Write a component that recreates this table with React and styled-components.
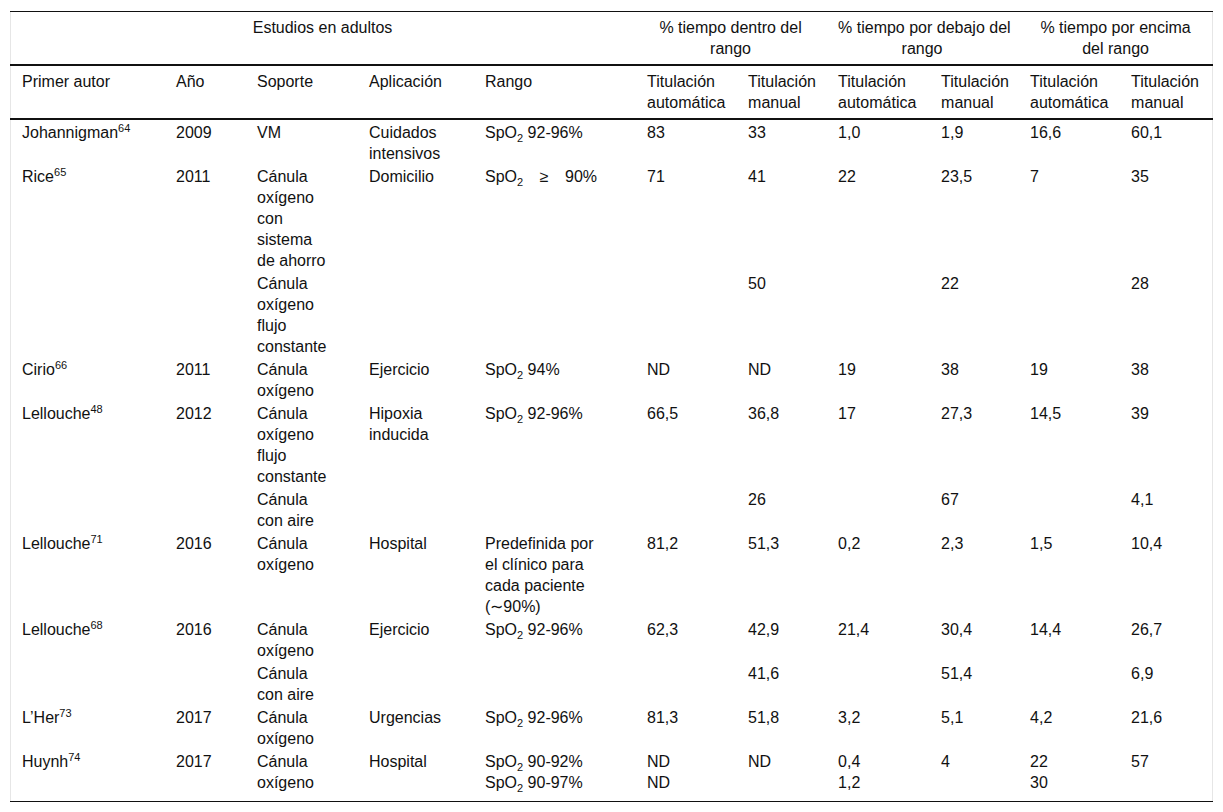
import React from "react";
import styled, { createGlobalStyle } from "styled-components";

const Global = createGlobalStyle`
  html, body { margin: 0; padding: 0; background: #ffffff; }
  body { font-family: "Liberation Sans", Arial, sans-serif; color: #111111; }
`;

const COLS = [
  { w: 154, pr: 12 },
  { w: 81, pr: 8 },
  { w: 112, pr: 25 },
  { w: 116, pr: 12 },
  { w: 162, pr: 38 },
  { w: 101, pr: 8 },
  { w: 90, pr: 6 },
  { w: 103, pr: 8 },
  { w: 89, pr: 6 },
  { w: 101, pr: 8 },
  { w: 94, pr: 6 },
];

const Page = styled.div`
  padding: 11px 10px 12px;
`;

const Frame = styled.div`
  width: 1203px;
  box-shadow: inset 1px 0 #e6e6e6, inset -1px 0 #e6e6e6;
`;

const Table = styled.table`
  width: 1203px;
  table-layout: fixed;
  border-collapse: collapse;
  font-size: 16px;
  line-height: 21px;
  border-top: 1px solid #111;
  border-bottom: 1px solid #111;
`;

const Col = styled.col`
  width: ${(p) => p.$w}px;
`;

const HeadRow = styled.tr`
  border-bottom: 2px solid #111;
`;

const HeadCell = styled.th`
  font-weight: 400;
  vertical-align: top;
  text-align: ${(p) => (p.$center ? "center" : "left")};
  white-space: ${(p) => (p.$center ? "nowrap" : "normal")};
  padding: 5px ${(p) => (p.$center ? 12 : p.$pr)}px 5px 12px;
`;

const Body = styled.tbody`
  tr:last-child td {
    padding-bottom: 8px;
  }
`;

const Cell = styled.td`
  vertical-align: top;
  text-align: left;
  padding: 2px ${(p) => p.$pr}px 0 12px;
  ${(p) => (p.$justify ? "text-align: justify; text-align-last: justify;" : "")}
`;

const Sup = styled.sup`
  font-size: 11px;
  line-height: 0;
  vertical-align: 6px;
`;

const Sub = styled.sub`
  font-size: 11px;
  line-height: 0;
  vertical-align: -4px;
`;

const Author = ({ name, refNo }) => (
  <>
    {name}
    <Sup>{refNo}</Sup>
  </>
);

const Spo = ({ children }) => (
  <>
    SpO<Sub>2</Sub> {children}
  </>
);

const rows = [
  {
    cells: [
      <Author name="Johannigman" refNo="64" />,
      "2009",
      "VM",
      "Cuidados intensivos",
      <Spo>92-96%</Spo>,
      "83",
      "33",
      "1,0",
      "1,9",
      "16,6",
      "60,1",
    ],
  },
  {
    justify: 4,
    cells: [
      <Author name="Rice" refNo="65" />,
      "2011",
      "Cánula oxígeno con sistema de ahorro",
      "Domicilio",
      <Spo>≥ 90%</Spo>,
      "71",
      "41",
      "22",
      "23,5",
      "7",
      "35",
    ],
  },
  {
    cells: ["", "", "Cánula oxígeno flujo constante", "", "", "", "50", "", "22", "", "28"],
  },
  {
    cells: [
      <Author name="Cirio" refNo="66" />,
      "2011",
      "Cánula oxígeno",
      "Ejercicio",
      <Spo>94%</Spo>,
      "ND",
      "ND",
      "19",
      "38",
      "19",
      "38",
    ],
  },
  {
    cells: [
      <Author name="Lellouche" refNo="48" />,
      "2012",
      "Cánula oxígeno flujo constante",
      "Hipoxia inducida",
      <Spo>92-96%</Spo>,
      "66,5",
      "36,8",
      "17",
      "27,3",
      "14,5",
      "39",
    ],
  },
  {
    cells: ["", "", "Cánula con aire", "", "", "", "26", "", "67", "", "4,1"],
  },
  {
    cells: [
      <Author name="Lellouche" refNo="71" />,
      "2016",
      "Cánula oxígeno",
      "Hospital",
      "Predefinida por el clínico para cada paciente (∼90%)",
      "81,2",
      "51,3",
      "0,2",
      "2,3",
      "1,5",
      "10,4",
    ],
  },
  {
    cells: [
      <Author name="Lellouche" refNo="68" />,
      "2016",
      "Cánula oxígeno",
      "Ejercicio",
      <Spo>92-96%</Spo>,
      "62,3",
      "42,9",
      "21,4",
      "30,4",
      "14,4",
      "26,7",
    ],
  },
  {
    cells: ["", "", "Cánula con aire", "", "", "", "41,6", "", "51,4", "", "6,9"],
  },
  {
    cells: [
      <Author name="L’Her" refNo="73" />,
      "2017",
      "Cánula oxígeno",
      "Urgencias",
      <Spo>92-96%</Spo>,
      "81,3",
      "51,8",
      "3,2",
      "5,1",
      "4,2",
      "21,6",
    ],
  },
  {
    cells: [
      <Author name="Huynh" refNo="74" />,
      "2017",
      "Cánula oxígeno",
      "Hospital",
      <>
        <Spo>90-92%</Spo>
        <br />
        <Spo>90-97%</Spo>
      </>,
      <>
        ND
        <br />
        ND
      </>,
      "ND",
      <>
        0,4
        <br />
        1,2
      </>,
      "4",
      <>
        22
        <br />
        30
      </>,
      "57",
    ],
  },
];

const subHeads = [
  "Primer autor",
  "Año",
  "Soporte",
  "Aplicación",
  "Rango",
  "Titulación automática",
  "Titulación manual",
  "Titulación automática",
  "Titulación manual",
  "Titulación automática",
  "Titulación manual",
];

export default function App() {
  return (
    <>
      <Global />
      <Page>
        <Frame>
          <Table>
            <colgroup>
              {COLS.map((c, i) => (
                <Col key={i} $w={c.w} />
              ))}
            </colgroup>
            <thead>
              <HeadRow>
                <HeadCell colSpan={5} $center>
                  Estudios en adultos
                </HeadCell>
                <HeadCell colSpan={2} $center>
                  % tiempo dentro del
                  <br />
                  rango
                </HeadCell>
                <HeadCell colSpan={2} $center>
                  % tiempo por debajo del
                  <br />
                  rango
                </HeadCell>
                <HeadCell colSpan={2} $center>
                  % tiempo por encima
                  <br />
                  del rango
                </HeadCell>
              </HeadRow>
              <HeadRow>
                {subHeads.map((h, i) => (
                  <HeadCell key={i} $pr={COLS[i].pr}>
                    {h}
                  </HeadCell>
                ))}
              </HeadRow>
            </thead>
            <Body>
              {rows.map((r, ri) => (
                <tr key={ri}>
                  {r.cells.map((c, ci) => (
                    <Cell key={ci} $pr={COLS[ci].pr} $justify={r.justify === ci}>
                      {c}
                    </Cell>
                  ))}
                </tr>
              ))}
            </Body>
          </Table>
        </Frame>
      </Page>
    </>
  );
}
